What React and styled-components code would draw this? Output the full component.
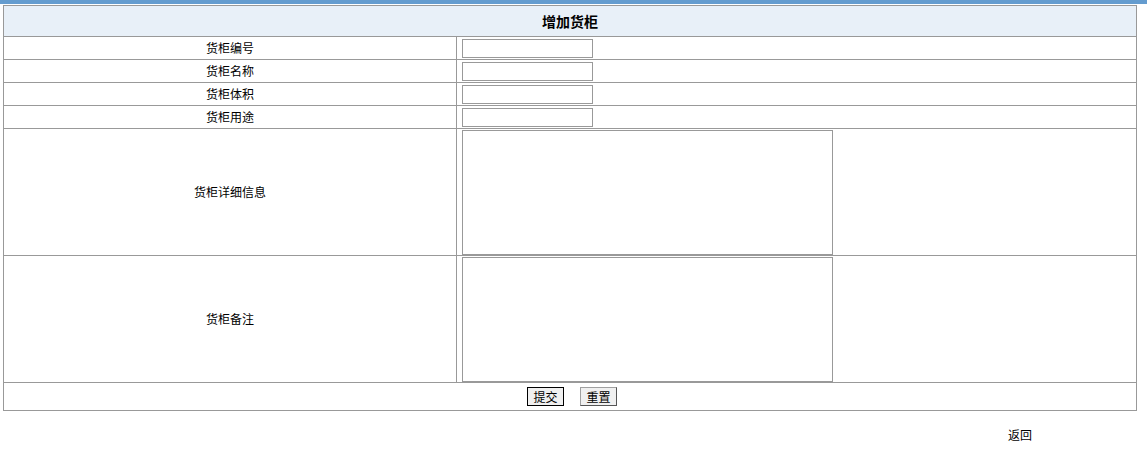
import React from 'react';
import styled, { createGlobalStyle } from 'styled-components';

const GlobalStyle = createGlobalStyle`
  body {
    margin: 0;
    background: #fff;
    font-family: "SimSun", "Noto Sans CJK SC", "Liberation Sans", sans-serif;
    font-size: 12px;
    color: #000;
  }
`;

const TopBar = styled.div`
  height: 4px;
  background: #649ccf;
  margin-bottom: 1px;
`;

const Table = styled.table`
  margin-left: 3px;
  width: 1134px;
  border-collapse: collapse;
  table-layout: fixed;
`;

const HeadCell = styled.th`
  height: 30px;
  padding: 0;
  background: #e8f0f8;
  border: 1px solid #999;
  font-size: 14px;
  font-weight: bold;
  text-align: center;
`;

// label cells sit a pixel higher than centred, like the original page
const Label = styled.td`
  height: ${(p) => p.$h - 1}px;
  padding: 0 0 1px;
  border: 1px solid #999;
  text-align: center;
  vertical-align: middle;
`;

const Field = styled.td`
  height: ${(p) => p.$h}px;
  padding: 0 0 0 5px;
  border: 1px solid #999;
  vertical-align: middle;
`;

const Input = styled.input`
  display: block;
  box-sizing: border-box;
  width: 131px;
  height: 19px;
  margin: 0;
  border: 1px solid #999;
  padding: 1px 2px;
  font: inherit;
`;

const Area = styled.textarea`
  display: block;
  box-sizing: border-box;
  width: 371px;
  height: 125px;
  margin: 0;
  border: 1px solid #999;
  padding: 2px;
  font: inherit;
  resize: none;
  overflow-y: scroll;
`;

const Actions = styled.td`
  height: 27px;
  padding: 0 0 0 4px;
  border: 1px solid #999;
  text-align: center;
  vertical-align: middle;
`;

const Button = styled.button`
  box-sizing: border-box;
  width: 37px;
  height: 19px;
  margin: 0 8px;
  padding: 0;
  background: #f0f0f0;
  border: 1px solid ${(p) => (p.$primary ? '#000' : '#a0a0a0')};
  border-right-color: ${(p) => (p.$primary ? '#000' : '#555')};
  border-bottom-color: ${(p) => (p.$primary ? '#000' : '#555')};
  font-family: inherit;
  font-size: 12px;
  color: #000;
`;

const Footer = styled.div`
  display: flex;
  justify-content: flex-end;
  padding: 15px 115px 0 0;
`;

const BackLink = styled.a`
  color: #000;
  text-decoration: none;
  font-size: 12px;
`;

const textRows = ['货柜编号', '货柜名称', '货柜体积', '货柜用途'];
const areaRows = ['货柜详细信息', '货柜备注'];

const App = () => {
  return (
    <>
      <GlobalStyle />
      <TopBar />
      <Table>
        <colgroup>
          <col style={{ width: '40%' }} />
          <col />
        </colgroup>
        <tbody>
          <tr>
            <HeadCell colSpan={2}>增加货柜</HeadCell>
          </tr>
          {textRows.map((name) => (
            <tr key={name}>
              <Label $h={22}>{name}</Label>
              <Field $h={22}>
                <Input type="text" />
              </Field>
            </tr>
          ))}
          {areaRows.map((name) => (
            <tr key={name}>
              <Label $h={126}>{name}</Label>
              <Field $h={126}>
                <Area />
              </Field>
            </tr>
          ))}
          <tr>
            <Actions colSpan={2}>
              <Button $primary>提交</Button>
              <Button>重置</Button>
            </Actions>
          </tr>
        </tbody>
      </Table>
      <Footer>
        <BackLink href="#">返回</BackLink>
      </Footer>
    </>
  );
};

export default App;
